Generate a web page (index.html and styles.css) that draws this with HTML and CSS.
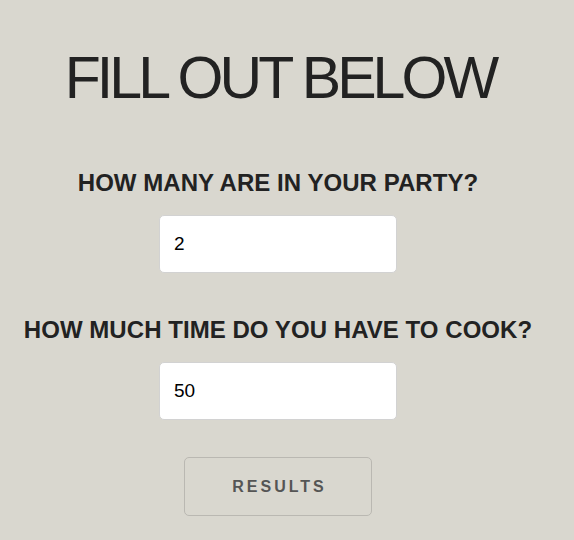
FILE: index.html
```html
<!DOCTYPE html>
<html>
<head>
<meta charset="utf-8">
<link rel="stylesheet" href="styles.css">
</head>
<body>
<main class="page">
  <h1 class="title">FILL OUT BELOW</h1>
  <form class="form">
    <label class="question" for="party">HOW MANY ARE IN YOUR PARTY?</label>
    <input class="field" id="party" type="text" value="2">
    <label class="question" for="time">HOW MUCH TIME DO YOU HAVE TO COOK?</label>
    <input class="field" id="time" type="text" value="50">
    <button class="results" type="button">RESULTS</button>
  </form>
</main>
</body>
</html>
```
FILE: styles.css
```css
html, body {
  margin: 0;
  padding: 0;
  background: #d9d7cf;
}
.page {
  display: flex;
  flex-direction: column;
  align-items: center;
  padding-right: 18px;
  font-family: "Liberation Sans", Arial, sans-serif;
  color: #222;
}
.title {
  margin: 46px 0 0;
  padding-left: 4px;
  font-size: 59px;
  font-weight: 400;
  line-height: 64px;
  letter-spacing: -3.9px;
}
.form {
  display: flex;
  flex-direction: column;
  align-items: center;
  margin-top: 60px;
}
.question {
  font-size: 24px;
  font-weight: 700;
  line-height: 26px;
  letter-spacing: 0.05px;
}
.field {
  box-sizing: border-box;
  width: 238px;
  height: 58px;
  margin: 19px 0 44px;
  padding: 0 14px;
  border: 1px solid #d2d2d2;
  border-radius: 5px;
  background: #fff;
  font-family: "Liberation Sans", Arial, sans-serif;
  font-size: 19px;
  color: #000;
}
.results {
  box-sizing: border-box;
  width: 188px;
  height: 59px;
  margin-top: -7px;
  padding: 0 0 0 3px;
  border: 1px solid #bab8b2;
  border-radius: 5px;
  background: transparent;
  font-family: "Liberation Sans", Arial, sans-serif;
  font-size: 16px;
  font-weight: 700;
  letter-spacing: 3px;
  color: #555;
}
```
